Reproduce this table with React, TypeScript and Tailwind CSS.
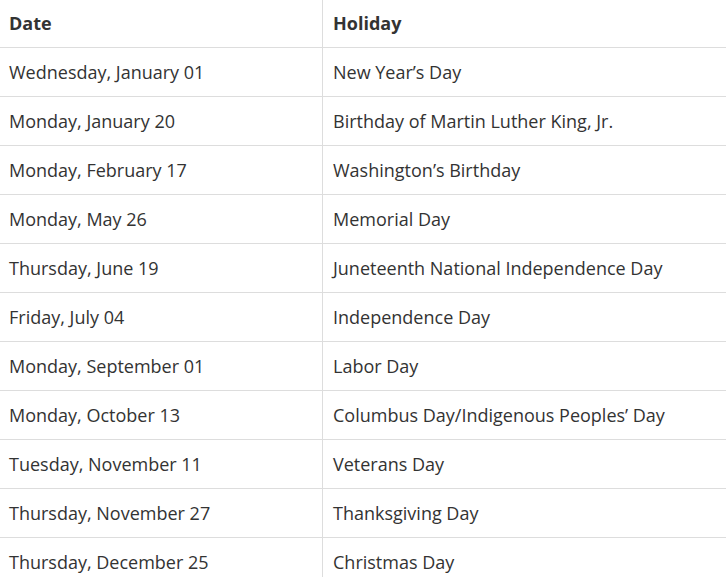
const holidays = [
  ["Wednesday, January 01", "New Year’s Day"],
  ["Monday, January 20", "Birthday of Martin Luther King, Jr."],
  ["Monday, February 17", "Washington’s Birthday"],
  ["Monday, May 26", "Memorial Day"],
  ["Thursday, June 19", "Juneteenth National Independence Day"],
  ["Friday, July 04", "Independence Day"],
  ["Monday, September 01", "Labor Day"],
  ["Monday, October 13", "Columbus Day/Indigenous Peoples’ Day"],
  ["Tuesday, November 11", "Veterans Day"],
  ["Thursday, November 27", "Thanksgiving Day"],
  ["Thursday, December 25", "Christmas Day"],
];

const App = () => {
  return (
    <div className="w-[726px] h-[577px] overflow-hidden bg-white text-[18px] text-[#333333] font-['Open_Sans',sans-serif]">
      {/* Header */}
      <div className="flex h-[48px] border-b border-[#dddddd]">
        <div className="w-[323px] pl-[9px] border-r border-[#dddddd] flex items-center font-bold">Date</div>
        <div className="flex-1 pl-[10px] flex items-center font-bold">Holiday</div>
      </div>

      {holidays.map(([date, name]) => (
        <div key={date} className="flex h-[49px] shrink-0 border-b border-[#dddddd]">
          <div className="w-[323px] pl-[9px] border-r border-[#dddddd] flex items-center">{date}</div>
          <div className="flex-1 pl-[10px] flex items-center">{name}</div>
        </div>
      ))}
    </div>
  );
};

export default App;
